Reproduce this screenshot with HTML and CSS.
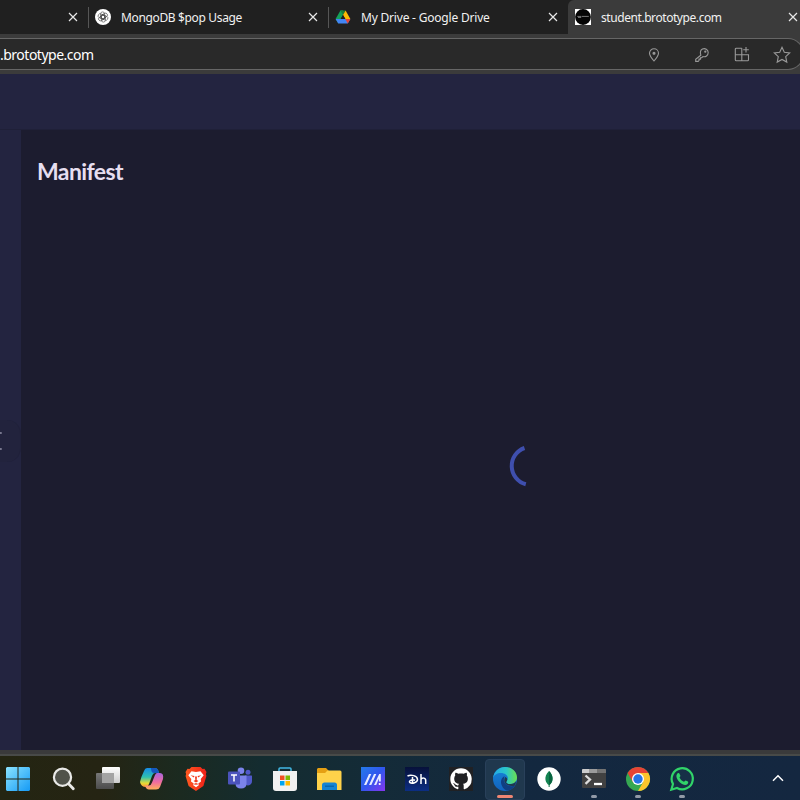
FILE: index.html
```html
<!DOCTYPE html>
<html lang="en">
<head>
<meta charset="utf-8">
<title>student.brototype.com</title>
<link rel="stylesheet" href="styles.css">
</head>
<body>
<div class="screen">
  <div class="tabs">
    <div class="tab first"><svg class="close" viewBox="0 0 10 10"><path d="M1 1l8 8M9 1l-8 8"/></svg></div>
    <div class="tab">
      <svg class="fav" viewBox="0 0 16 16"><circle cx="8" cy="8" r="8" fill="#fff"/><g fill="none" stroke="#444" stroke-width=".6"><rect x="5.6" y="2.9" width="4" height="7.2" rx="2"/><rect x="5.6" y="2.9" width="4" height="7.2" rx="2" transform="rotate(60 8 8)"/><rect x="5.6" y="2.9" width="4" height="7.2" rx="2" transform="rotate(120 8 8)"/><rect x="5.6" y="2.9" width="4" height="7.2" rx="2" transform="rotate(180 8 8)"/><rect x="5.6" y="2.9" width="4" height="7.2" rx="2" transform="rotate(240 8 8)"/><rect x="5.6" y="2.9" width="4" height="7.2" rx="2" transform="rotate(300 8 8)"/></g></svg>
      <span class="label mongo">MongoDB $pop Usage</span>
      <svg class="close" viewBox="0 0 10 10"><path d="M1 1l8 8M9 1l-8 8"/></svg>
    </div>
    <div class="tab">
      <svg class="fav" viewBox="0 0 16 16"><path d="M5.400 1.500H8V6L3.300 14.500.600 9.900z" fill="#15a05a"/><path d="M5.400 1.500h5.200L8 6z" fill="#188038"/><path d="M10.600 1.500l4.800 8.400h-5.100L8 5.900z" fill="#fbbc04"/><path d="M.6 9.900h14.800L12.700 14.500H3.300z" fill="#4285f4"/><path d="M10.300 9.900h5.100l-2.700 4.600z" fill="#ea4335"/><path d="M8 5.900l2.400 4.100H5.600z" fill="#202020"/></svg>
      <span class="label drive">My Drive - Google Drive</span>
      <svg class="close" viewBox="0 0 10 10"><path d="M1 1l8 8M9 1l-8 8"/></svg>
    </div>
    <div class="tab active">
      <svg class="fav" viewBox="0 0 16 16"><path d="M0 0h16v16H0z" fill="#fff"/><circle cx="8" cy="8" r="7.900" fill="#050505"/><path d="M2.300 7.400h4M6.800 7.400h7M3 8.400h3.200" stroke="#777" stroke-width="1"/></svg>
      <span class="label student">student.brototype.com</span>
      <svg class="close" viewBox="0 0 10 10"><path d="M1 1l8 8M9 1l-8 8"/></svg>
    </div>
  </div>
  <div class="toolbar">
    <div class="address">
      <span class="url">.brototype.com</span>
      <div class="tools">
        <svg viewBox="0 0 18 18"><path d="M9 15C6 11.500 4.500 9.500 4.500 7.200a4.500 4.500 0 0 1 9 0C13.500 9.500 12 11.500 9 15z"/><circle cx="9" cy="7.200" r="1" fill="#aaa"/></svg>
        <svg viewBox="0 0 18 18"><path d="M7.800 9.200C7 6.500 7.800 4 9.500 3.100c2.400-1.300 5.700.4 5.700 3.500 0 3-2.700 4.700-5.300 3.900L8.700 11.700H7.500v1.400H6v1.500l-.8.8H2.700v-2.200z"/><circle cx="12.300" cy="5.700" r=".6"/></svg>
        <svg viewBox="0 0 18 18"><path d="M8.800 2.200H3.300a1 1 0 0 0-1 1v10.600a1 1 0 0 0 1 1h11.200a1 1 0 0 0 1-1V8.700H2.300M8.800 2.200v12.600M13 1v5.600M10.200 3.800h5.600"/></svg>
        <svg viewBox="0 0 18 18"><path d="M9 1.300l2.300 5 5.400.6-4 3.700 1.100 5.500L9 13.400l-4.800 2.700 1.100-5.500-4-3.700 5.400-.6z"/></svg>
      </div>
    </div>
  </div>
  <div class="page">
    <header class="app-header"></header>
    <div class="app-body">
      <aside class="sidebar"><div class="handle"><i></i><i></i></div></aside>
      <main class="content">
        <h1>Manifest</h1>
        <div class="loading"><svg viewBox="0 0 44 44"><path d="M21.500 4A19 19 0 0 0 22.800 40.300"/></svg></div>
      </main>
    </div>
  </div>
  <div class="frame"></div>
  <footer class="taskbar">
    <div class="app start"><svg viewBox="0 0 24 24"><defs><linearGradient id="win" x1="0" y1="0" x2="1" y2="1"><stop stop-color="#8be4ff"/><stop offset="1" stop-color="#159af5"/></linearGradient></defs><path fill="url(#win)" d="M1 0h10.500v11.500H0V1zM12.500 0H23l1 1v10.500H12.500zM0 12.500h11.500V24H1l-1-1zM12.500 12.500H24V23l-1 1H12.500z"/></svg></div>
    <div class="app"><svg viewBox="0 0 24 24"><circle cx="10.500" cy="10.200" r="8.600" fill="#50524a" stroke="#e9e9e7" stroke-width="2.200"/><path d="M16.800 17l4.500 4.800" stroke="#e9e9e7" stroke-width="2.800" stroke-linecap="round"/></svg></div>
    <div class="app"><svg viewBox="0 0 24 24"><defs><linearGradient id="tv" x2="0" y2="1"><stop stop-color="#fff"/><stop offset="1" stop-color="#ccc"/></linearGradient><linearGradient id="tw" x2="0" y2="1"><stop stop-color="#777"/><stop offset="1" stop-color="#4c4c4c"/></linearGradient></defs><rect x="6" y="0" width="18" height="16" rx="1" fill="url(#tv)"/><rect y="6" width="18" height="16" rx="1" fill="url(#tw)"/><path d="M6 6h12v10H6z" fill="#a3a3a3"/></svg></div>
    <div class="app"><svg viewBox="0 0 24 24"><defs><linearGradient id="cl" x2="0" y2="1"><stop stop-color="#168be8"/><stop offset=".48" stop-color="#2fc1b0"/><stop offset=".8" stop-color="#e5dc35"/><stop offset="1" stop-color="#ff9338"/></linearGradient><linearGradient id="cr" x2="0" y2="1"><stop stop-color="#a865df"/><stop offset=".55" stop-color="#ef6b9f"/><stop offset="1" stop-color="#ffb05a"/></linearGradient></defs><path d="M7 1h8q3 0 4 5h-4q-2 0-3 3L9 17q-1 3-3 3-5 0-6-5Q1 10 4 4q1-3 3-3z" fill="url(#cl)"/><path d="M14 1h1q3 0 4 5h-5q-3 0-3-5z" fill="#1557bd"/><path d="M17 6h3q4 0 3 6l-3 8q-1 2.500-4 2.500H9q-3 0-4-4h4q2 0 3-3L15 8q1-2 2-2z" fill="url(#cr)"/></svg></div>
    <div class="app"><svg viewBox="0 0 24 24"><defs><linearGradient id="br"><stop stop-color="#ff5a20"/><stop offset="1" stop-color="#ef2018"/></linearGradient></defs><path d="M7.500 0h9l2 2 2-.2L22.500 5l-.6 2 .5 2-3 10-7.400 5-7.400-5L1.600 9l.5-2-.6-2 2-3.200 2 .2z" fill="url(#br)"/><path d="M7.500 4.200l4.500.7 4.500-.7 3.200 4-3 3.800.3 2.500-2.700 2L15 18l-3 2.200L9 18l.7-1.500-2.700-2 .3-2.500-3-3.800z" fill="#fff"/><path d="M6.500 8.200l4 .8-.7 1.400zM17.500 8.200l-4 .8.7 1.400zM11 9.500h2l-.3 3.500 1.800 1-2.500 1.600L9.500 14l1.800-1zM9 17.200l3-1.200 3 1.200-3 .6z" fill="#f33a1d"/></svg></div>
    <div class="app"><svg viewBox="0 0 24 24"><circle cx="20" cy="5.200" r="2.500" fill="#5059c9"/><path d="M17 8.500h6.500q.5 0 .5.600v5q0 4-4 4.300-3 0-3-3z" fill="#5059c9"/><circle cx="13" cy="3.800" r="3.300" fill="#7b83eb"/><path d="M8 8.500h10.500v8q0 5-5.500 5t-5.500-5z" fill="#7b83eb"/><rect y="4.500" width="12" height="13" rx="1" fill="#4b53bc"/><path d="M3 8h6M6 8v6.500" stroke="#fff" stroke-width="1.500"/></svg></div>
    <div class="app"><svg viewBox="0 0 24 24"><path d="M6 5V2q0-1 1-1h10q1 0 1 1v3" fill="none" stroke="#42b7e4" stroke-width="1.500"/><path d="M0 4h24v17q0 3-3 3H3q-3 0-3-3z" fill="#f1f1f1"/><path d="M7 8.500h4.500V13H7z" fill="#f25022"/><path d="M12.500 8.500H17V13h-4.500z" fill="#7fba00"/><path d="M7 14h4.500v4.500H7z" fill="#00a4ef"/><path d="M12.500 14H17v4.500h-4.500z" fill="#ffb900"/></svg></div>
    <div class="app"><svg viewBox="0 0 24 24"><path d="M1 1h8l3 3h-1L9 6H0V2z" fill="#e59f13"/><path d="M0 6h8l2.500-2.500H23q1.500 0 1.500 1.500v18H0z" fill="#ffd24a"/><path d="M5 23v-5q0-2.500 2.500-2.500h10q2.500 0 2.500 2.500v5z" fill="#1684d3"/><path d="M8 19.200h9" stroke="#0862a8" stroke-width="1.300"/></svg></div>
    <div class="app"><svg viewBox="0 0 24 24"><defs><linearGradient id="ma" x2="1" y2="1"><stop stop-color="#247bea"/><stop offset=".5" stop-color="#3156ee"/><stop offset="1" stop-color="#8735ef"/></linearGradient></defs><path d="M0 0h24v24H0z" fill="url(#ma)"/><path d="M3 18L8 7h2.300l-5 11zM8 18l5-11h2.300l-5 11zM13 18l5.200-11h1.600v7.500h-1.900V11.500L15.200 18z" fill="#e8ecff"/><circle cx="18.700" cy="17" r="1.100" fill="#fff"/></svg></div>
    <div class="app"><svg viewBox="0 0 24 24"><defs><linearGradient id="dh" x2="0" y2="1"><stop stop-color="#07113a"/><stop offset="1" stop-color="#0c2e83"/></linearGradient></defs><path d="M0 0h24v24H0z" fill="url(#dh)"/><path d="M2.500 9C6 7.100 12.500 8.800 12.500 12.500c0 3-5.500 4.700-7.500 3.200-2-1.700 2-3.800 5-2.500M7.500 10v6.500M16 7v10M16 12.500c1-2 4.700-2 4.700 1V17" fill="none" stroke="#fff" stroke-width="1.500"/></svg></div>
    <div class="app"><svg viewBox="0 0 24 24"><path d="M0 0h24v24H0z" fill="#202124"/><g transform="translate(1.300 1.300) scale(1.340)"><path fill="#fff" d="M8 0C3.580 0 0 3.580 0 8c0 3.540 2.290 6.530 5.470 7.590.4.070.55-.17.55-.38 0-.19-.01-.82-.01-1.490-2.010.37-2.530-.49-2.690-.94-.09-.23-.48-.94-.82-1.130-.28-.15-.68-.52-.01-.53.63-.01 1.080.58 1.230.82.720 1.210 1.870.87 2.330.66.070-.52.280-.87.510-1.070-1.780-.2-3.640-.89-3.640-3.950 0-.87.310-1.590.82-2.150-.08-.2-.36-1.020.08-2.120 0 0 .67-.21 2.200.82.640-.18 1.320-.27 2-.27s1.360.09 2 .27c1.530-1.040 2.200-.82 2.200-.82.440 1.100.16 1.920.08 2.120.51.560.82 1.270.82 2.150 0 3.070-1.870 3.750-3.650 3.950.29.250.54.730.54 1.480 0 1.070-.01 1.930-.01 2.200 0 .21.150.46.550.38A8.010 8.010 0 0 0 16 8c0-4.420-3.580-8-8-8z"/></g></svg></div>
    <div class="app current"><svg viewBox="0 0 24 24"><defs><linearGradient id="e1" x2="1"><stop stop-color="#24a8e8"/><stop offset=".55" stop-color="#2bc7c8"/><stop offset="1" stop-color="#6be04e"/></linearGradient><linearGradient id="e2" x2="0" y2="1"><stop stop-color="#1686d9"/><stop offset="1" stop-color="#1262bd"/></linearGradient></defs><circle cx="12" cy="12" r="12" fill="url(#e2)"/><path d="M0 11C1 4.500 6 0 12 0c7 0 12 5 12 10.500 0 4-3 6.500-6.500 6.500-3 0-5-1-4-2.600C17 10 13 6 8 6 4 6 1 8 0 11z" fill="url(#e1)"/><path d="M11.500 9C8 11 7 15 9 19c1 2.500 3.500 4.500 6 4.600 3-.8 5.500-2.500 7.200-5.200C17 20.500 12 18 11 14.500c-.6-2 .3-4 .5-5.500z" fill="#103f83"/><path d="M13.500 14.400c-1 1.600 1 2.600 4 2.600 2.500 0 4.600-1.300 5.700-3L22.200 18.400C17 20 12.500 18 11.500 15c-.5-1.700 0-4 .7-5 2 .8 2.800 2.600 1.300 4.400z" fill="#20384e"/></svg></div>
    <div class="app"><svg viewBox="0 0 24 24"><circle cx="12" cy="12" r="11.700" fill="#fff"/><path d="M12 4C9 7 8 10 8.500 13c.4 2.500 2 4 3.100 5V20h.8v-2c1.300-1 2.800-2.500 3.100-5 .5-3-.5-6-3.500-9z" fill="#138351"/><path d="M12 4v16h.4v-2c4.500-3.500 4-10-.4-14z" fill="#086440"/></svg></div>
    <div class="app open"><svg viewBox="0 0 24 24"><path d="M0 2h24v18q0 1-1 1H1q-1 0-1-1z" fill="#414141"/><path d="M0 6V3q0-1 1-1h6v4z" fill="#ccc"/><path d="M7 2h8v4H7z" fill="#9b9b9b"/><path d="M15 2h8q1 0 1 1v3h-9z" fill="#737373"/><path d="M3.500 8.500l4.500 4-4.500 4.300" fill="none" stroke="#ddd" stroke-width="2.300"/><path d="M12 17h8" stroke="#fff" stroke-width="2.300"/></svg></div>
    <div class="app open"><svg viewBox="0 0 24 24"><circle cx="12" cy="12" r="12" fill="#36a852"/><path d="M12 12L1.600 6A12 12 0 0 1 22.400 6H12z" fill="#e74335"/><path d="M1.600 6l5.200 9L12 12V6z" fill="#e74335"/><path d="M12 6h10.400A12 12 0 0 1 12 24l5.200-9z" fill="#fdc52c"/><circle cx="12" cy="12" r="6" fill="#fff"/><circle cx="12" cy="12" r="4.700" fill="#2773e6"/></svg></div>
    <div class="app open"><svg viewBox="0 0 24 24"><path d="M1.300 22.700L3 17a10.600 10.600 0 1 1 4 4z" fill="#173047" stroke="#31d469" stroke-width="2.200"/><path d="M7.600 6.300c1-.7 1.700-.3 2 .6l.8 1.900c.2.700-1 1.500-.8 1.900 1 2 2.300 3.100 4.300 4 .6.200 1.300-1.400 1.800-1.200l2.200 1.100c.7.400.2 2.300-.8 2.900-2 1.200-5-.1-7.100-2-2.500-2.300-5.200-6.300-2.400-9.200z" fill="#31d469"/></svg></div>
    <svg class="chevron" viewBox="0 0 12 8"><path d="M1 6.700L6 1.700l5 5"/></svg>
  </footer>
</div>
</body>
</html>
```
FILE: styles.css
```css
* { box-sizing: border-box; }
body { margin: 0; background: #1c1c2f; font-family: "Noto Sans", "Open Sans", sans-serif; }
.screen { width: 800px; height: 800px; overflow: hidden; display: flex; flex-direction: column; }
svg { display: block; flex: none; }

.tabs { height: 34px; display: flex; background: #202020; flex: none; }
.tab { width: 240px; height: 34px; flex: none; display: flex; align-items: center; padding: 0 10px 0 6px; border-left: 1px solid transparent; border-image: linear-gradient(transparent 8px, #565656 8px, #565656 27px, transparent 27px) 1; }
.tab.first { width: 88px; border: 0; }
.tab.active { background: #3b3b3b; border: 0; padding-left: 7px; border-radius: 6px 0 0 0; }
.fav { width: 16px; height: 16px; margin-right: 10px; }
.close { width: 10px; height: 10px; margin-left: auto; fill: none; stroke: #e8e8e8; stroke-width: 1.2; }
.label { font-size: 12px; color: #f1f1f1; white-space: nowrap; }
.mongo { letter-spacing: -0.35px; }
.drive { letter-spacing: -0.2px; }
.student { letter-spacing: -0.43px; }

.toolbar { height: 40px; flex: none; background: #3b3b3b; padding: 4px 0; }
.address { width: 804px; height: 32px; background: #292929; border: 1px solid #666; border-left: 0; border-radius: 0 16px 16px 0; display: flex; align-items: center; justify-content: space-between; padding-right: 12px; }
.url { font-size: 14px; letter-spacing: -0.5px; color: #fff; }
.tools { display: flex; padding-top: 1px; }
.tools svg { width: 18px; height: 18px; margin-left: 22px; fill: none; stroke: #999; stroke-width: 1.1; }
.tools svg:nth-child(2) { margin-left: 30px; }

.page { height: 676px; flex: none; display: flex; flex-direction: column; }
.app-header { height: 56px; flex: none; background: #232440; border-bottom: 1px solid #1f2038; }
.app-body { flex: 1; display: flex; }
.sidebar { width: 21px; background: #232440; padding-top: 290px; }
.handle { height: 42px; border-right: 1px solid #20213a; border-radius: 0 14px 14px 0; background: #22233d; display: flex; flex-direction: column; justify-content: space-between; padding: 12px 0; }
.handle i { width: 2px; height: 2px; background: #77778e; border-radius: 0 1px 1px 0; }
.content { flex: 1; background: #1c1c2f; display: flex; flex-direction: column; padding: 24px 16px; }
h1 { margin: 0; font: bold 23px/34px Lato, sans-serif; letter-spacing: -0.6px; color: #e6def0; }
.loading { display: flex; padding: 256px 0 0 466px; }
.loading svg { width: 44px; height: 44px; fill: none; stroke: #3f4fae; stroke-width: 4; }

.frame { height: 6px; flex: none; background: linear-gradient(#3a3a3b 4px, #484a48 4px); }
.taskbar { height: 44px; flex: none; display: flex; background: linear-gradient(90deg, #242512 0, #252413 100px, #1b2a20 180px, #142c30 260px, #142b38 380px, #13283f 520px, #142740 800px); }
.app { width: 44.15px; height: 44px; flex: none; display: flex; flex-direction: column; align-items: center; padding-top: 11px; }
.app > svg { width: 24px; height: 24px; overflow: visible; }
.start { margin: 0 1.5px 0 -3.8px; }
.current { width: 40px; height: 41px; margin: 3px 2.08px 0; padding-top: 7px; border: 1px solid #29405a; border-radius: 4px; background: #20384e; }
.current::after { content: ""; width: 16px; height: 3px; flex: none; margin-top: 4px; border-radius: 2px; background: #ef8673; }
.open::after { content: ""; width: 6px; height: 3px; flex: none; margin-top: 4px; border-radius: 2px; background: #929aa7; }
.chevron { width: 12px; height: 8px; margin: 18px 16px 0 auto; fill: none; stroke: #fff; stroke-width: 1.5; }
```
